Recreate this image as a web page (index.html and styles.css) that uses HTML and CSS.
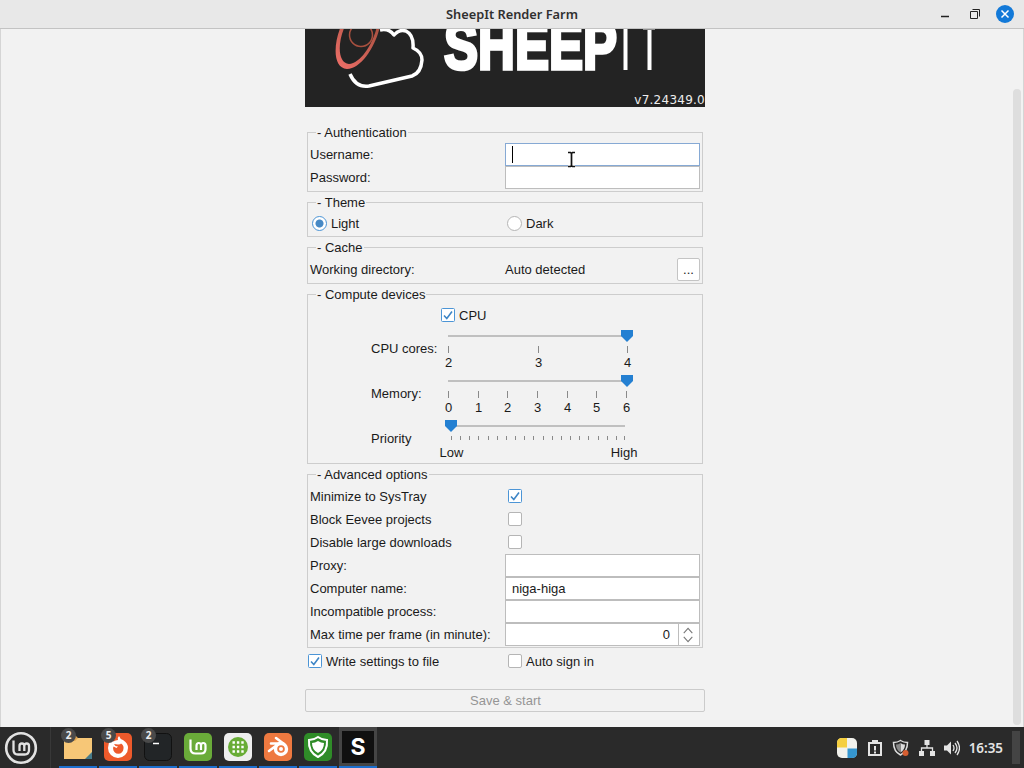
FILE: index.html
```
<!DOCTYPE html>
<html lang="en">
<head>
    <meta charset="UTF-8">
    <meta name="viewport" content="width=device-width, initial-scale=1.0">
    <title>SheepIt Render Farm</title>
    <link rel="stylesheet" href="styles.css">
</head>
<body>

    <!-- Title bar -->
    <header class="titlebar">
        <span class="titlebar-text">SheepIt Render Farm</span>
        <svg class="window-buttons" width="84" height="28" viewBox="0 0 84 28">
            <path d="M6 16.5h8" stroke="#222" stroke-width="1.5"/>
            <path d="M35.5 11.5h7v7h-7zM37.5 9.5h7v7" fill="none" stroke="#222"/>
            <circle cx="70" cy="14" r="9" fill="#1279d8"/>
            <path d="M66.5 10.5l7 7m0-7l-7 7" stroke="#fff" stroke-width="1.5"/>
        </svg>
    </header>

    <main class="window">
        <form class="settings">
            <!-- Logo, scrolled partly out of view -->
            <svg class="logo" width="400" height="78" viewBox="0 0 400 78">
                <defs>
                    <linearGradient id="ring" x1="0" y1="1" x2="1" y2="0">
                        <stop offset="0" stop-color="#f0706a"/>
                        <stop offset="1" stop-color="#a8503f"/>
                    </linearGradient>
                </defs>
                <rect width="400" height="78" fill="#232323"/>
                <path d="M75 1Q84-1 89 6Q94 0 101 2Q109 6 108 19Q117 23 117 31Q116 44 107 47L64 57Q51 59 45 45" fill="none" stroke="#fff" stroke-width="3.5" stroke-linejoin="round"/>
                <path fill-rule="evenodd" fill="url(#ring)" d="M36-3C28 16 28 39 42 40C56 40 71 17 75-3zM40-3C32 15 33 34 44 35C56 34 68 15 72-3z"/>
                <circle cx="56" cy="6" r="11.5" fill="none" stroke="#a8503f" stroke-width="1.5"/>
                <text class="logo-bold" x="139" y="39.5" textLength="173" lengthAdjust="spacingAndGlyphs">SHEEP</text>
                <path d="M320.500 0v41M344.500 0v41" fill="none" stroke="#fff" stroke-width="4"/>
                <path d="M338 .5h12" stroke="#8f8f8f"/>
                <text class="logo-version" x="400" y="75" text-anchor="end">v7.24349.0</text>
            </svg>

            <fieldset class="group auth">
                <legend>- Authentication</legend>
                <div class="row">
                    <span class="label">Username:</span>
                    <div class="field focused"><span class="caret"></span></div>
                </div>
                <div class="row">
                    <span class="label">Password:</span>
                    <div class="field"></div>
                </div>
            </fieldset>

            <fieldset class="group theme">
                <legend>- Theme</legend>
                <div class="row">
                    <span class="label option"><i class="radio on"></i>Light</span>
                    <span class="option"><i class="radio"></i>Dark</span>
                </div>
            </fieldset>

            <fieldset class="group cache">
                <legend>- Cache</legend>
                <div class="row">
                    <span class="label">Working directory:</span>
                    <span class="directory">Auto detected</span>
                    <span class="browse">...</span>
                </div>
            </fieldset>

            <fieldset class="group compute">
                <legend>- Compute devices</legend>
                <div class="cpu-row">
                    <svg class="check" width="14" height="14" viewBox="0 0 14 14"><rect x=".5" y=".5" width="13" height="13" rx="1" fill="#fff" stroke="#4c95d6"/><path d="M3 7.500l2.800 3L11 3.500" fill="none" stroke="#3f86c6" stroke-width="1.600"/></svg>
                    CPU
                </div>
                <div class="slider-row">
                    <span class="slider-label">CPU cores:</span>
                    <svg class="slider" width="206" height="45" viewBox="0 0 206 45">
                        <path class="track" d="M7 10h178"/>
                        <path class="ticks" d="M7.500 20v7M97.500 20v7M186.500 20v7"/>
                        <path class="thumb" d="M180 4h12v6l-6 6l-6-6z"/>
                        <text x="7.500" y="41">2</text>
                        <text x="97.500" y="41">3</text>
                        <text x="186.500" y="41">4</text>
                    </svg>
                </div>
                <div class="slider-row">
                    <span class="slider-label">Memory:</span>
                    <svg class="slider" width="206" height="45" viewBox="0 0 206 45">
                        <path class="track" d="M7 10h178"/>
                        <path class="ticks" d="M7.500 20v7M37.500 20v7M66.500 20v7M96.500 20v7M126.500 20v7M155.500 20v7M185.500 20v7"/>
                        <path class="thumb" d="M180 4h12v6l-6 6l-6-6z"/>
                        <text x="7.500" y="41">0</text>
                        <text x="37.500" y="41">1</text>
                        <text x="66.500" y="41">2</text>
                        <text x="96.500" y="41">3</text>
                        <text x="126.500" y="41">4</text>
                        <text x="155.500" y="41">5</text>
                        <text x="185.500" y="41">6</text>
                    </svg>
                </div>
                <div class="slider-row">
                    <span class="slider-label">Priority</span>
                    <svg class="slider" width="206" height="45" viewBox="0 0 206 45">
                        <path class="track" d="M10 10h174"/>
                        <path class="ticks" d="M10.500 20v4M19.500 20v4M28.500 20v4M37.500 20v4M47.500 20v4M56.500 20v4M65.500 20v4M74.500 20v4M83.500 20v4M92.500 20v4M102.500 20v4M111.500 20v4M120.500 20v4M129.500 20v4M138.500 20v4M147.500 20v4M157.500 20v4M166.500 20v4M175.500 20v4M183.500 20v4"/>
                        <path class="thumb" d="M4 4h12v6l-6 6l-6-6z"/>
                        <text x="10.500" y="41">Low</text>
                        <text x="183" y="41">High</text>
                    </svg>
                </div>
            </fieldset>

            <fieldset class="group advanced">
                <legend>- Advanced options</legend>
                <div class="row">
                    <span class="label">Minimize to SysTray</span>
                    <svg class="check indent" width="14" height="14" viewBox="0 0 14 14"><rect x=".5" y=".5" width="13" height="13" rx="1" fill="#fff" stroke="#4c95d6"/><path d="M3 7.500l2.800 3L11 3.500" fill="none" stroke="#3f86c6" stroke-width="1.600"/></svg>
                </div>
                <div class="row">
                    <span class="label">Block Eevee projects</span>
                    <i class="box indent"></i>
                </div>
                <div class="row">
                    <span class="label">Disable large downloads</span>
                    <i class="box indent"></i>
                </div>
                <div class="row">
                    <span class="label">Proxy:</span>
                    <div class="field"></div>
                </div>
                <div class="row">
                    <span class="label">Computer name:</span>
                    <div class="field">niga-higa</div>
                </div>
                <div class="row">
                    <span class="label">Incompatible process:</span>
                    <div class="field"></div>
                </div>
                <div class="row">
                    <span class="label">Max time per frame (in minute):</span>
                    <div class="field spinner">
                        <span class="spinner-value">0</span>
                        <svg class="spinner-arrows" width="21" height="21" viewBox="0 0 21 21"><path d="M5 9l4.500-5L14 9M5 13l4.500 5l4.500-5" fill="none" stroke="#777" stroke-width="1.100"/></svg>
                    </div>
                </div>
            </fieldset>

            <div class="bottom-options">
                <span class="label option">
                    <svg class="check" width="14" height="14" viewBox="0 0 14 14"><rect x=".5" y=".5" width="13" height="13" rx="1" fill="#fff" stroke="#4c95d6"/><path d="M3 7.500l2.800 3L11 3.500" fill="none" stroke="#3f86c6" stroke-width="1.600"/></svg>
                    Write settings to file
                </span>
                <span class="option"><i class="box"></i>Auto sign in</span>
            </div>

            <button class="save" type="button" disabled>Save &amp; start</button>
        </form>
        <div class="scrollbar"></div>

        <!-- Mouse pointer -->
        <svg class="pointer" width="11" height="17" viewBox="0 0 11 17"><path d="M2 1.500h2.500l1 1l1-1H9M5.500 2v13M2 15.500h2.500l1-1l1 1H9" fill="none" stroke="#fff" stroke-width="3"/><path d="M2 1.500h2.500l1 1l1-1H9M5.500 2v13M2 15.500h2.500l1-1l1 1H9" fill="none" stroke="#111" stroke-width="1.700"/></svg>
    </main>

    <!-- Taskbar -->
    <footer class="taskbar">
        <svg class="menu-icon" width="34" height="34" viewBox="0 0 34 34">
            <circle cx="17" cy="17" r="14.800" fill="none" stroke="#e2e2e2" stroke-width="2.600"/>
            <path d="M9.500 9.500v9.500q0 4.500 4.500 4.500h6.500q4.500 0 4.500-4.500v-4q0-2.500-2.300-2.500t-2.400 2.500v5M20.300 15q0-2.500-2.400-2.500t-2.400 2.500v5" fill="none" stroke="#e2e2e2" stroke-width="2.300"/>
        </svg>
        <div class="tasks">
            <div class="task">
                <svg width="30" height="30" viewBox="0 0 30 30"><path d="M1 5q0-2 2-2h9l3 3h12q2 0 2 2v19H1z" fill="#e0a551"/><path d="M1 9h11l3-3h14v21H1z" fill="#f7c777"/><path d="M29 20v7h-7z" fill="#467b8a"/></svg>
                <b class="count">2</b>
            </div>
            <div class="task">
                <svg width="30" height="30" viewBox="0 0 30 30"><rect x="1" y="1" width="28" height="28" rx="5" fill="#ee5a2b"/><path d="M8 7l2.500 2.500Q12.500 8 15 8q-1-2 1-4q1 3 4 4q5 3 5 8a10 10 0 0 1-20 0q0-5 3-9z" fill="#fff"/><path d="M11 12l4 .5q3 0 3-1q3 2 2.500 5a5.200 5.200 0 0 1-10.400 0q0-1 .4-2l3 1.500l1.500-1.500q-3 0-4-2.500z" fill="#ee5a2b"/></svg>
                <b class="count">5</b>
            </div>
            <div class="task">
                <svg width="30" height="30" viewBox="0 0 30 30"><rect x="1.500" y="1.500" width="27" height="27" rx="5" fill="#222527" stroke="#111"/><path d="M10 11.500h6" stroke="#fff" stroke-width="1.500"/></svg>
                <b class="count">2</b>
            </div>
            <div class="task">
                <svg width="30" height="30" viewBox="0 0 30 30"><rect x="1" y="1" width="28" height="28" rx="5" fill="#6aab39"/><path d="M7.500 7.500v9q0 5 5 5h5.500q4.500 0 4.500-4.500v-3.500q0-2.500-2.200-2.500T18 13.500V18M18 13.500q0-2.500-2.200-2.500t-2.300 2.500V18" fill="none" stroke="#fff" stroke-width="2.200"/></svg>
            </div>
            <div class="task">
                <svg width="30" height="30" viewBox="0 0 30 30"><rect x="1" y="1" width="28" height="28" rx="5" fill="#eee"/><circle cx="15" cy="15" r="10" fill="#68ac36"/><path d="M9.500 10.500h12M9.500 15h12M9.500 19.500h12" stroke="#fff" stroke-width="2.400" stroke-dasharray="2.400 2"/></svg>
            </div>
            <div class="task">
                <svg width="30" height="30" viewBox="0 0 30 30"><rect x="1" y="1" width="28" height="28" rx="5" fill="#ee7940"/><circle cx="18" cy="17" r="5.500" fill="none" stroke="#fff" stroke-width="3.400"/><circle cx="18" cy="17" r="2" fill="#fff"/><path d="M13 6l8 6M8 11.500h9M6 19l8-6" stroke="#fff" stroke-width="2.600" stroke-linecap="round"/></svg>
            </div>
            <div class="task">
                <svg width="30" height="30" viewBox="0 0 30 30"><rect x="1" y="1" width="28" height="28" rx="5" fill="#2f8c28"/><path d="M15 5q4 3 9 3q1 12-9 17Q5 20 6 8q5 0 9-3z" fill="none" stroke="#fff" stroke-width="2"/><path d="M15 9q3 2 6 2q0 7-6 10q-6-3-6-10q3 0 6-2z" fill="#fff"/></svg>
            </div>
            <div class="task active">
                <span class="sheepit-icon">S</span>
            </div>
        </div>
        <div class="tray">
            <svg width="22" height="22" viewBox="0 0 22 22"><rect x="1" y="1" width="20" height="20" rx="5" fill="#f1f1ec"/><path d="M1 10.500V6q0-5 5-5h5v9.500z" fill="#f5cf3f"/><path d="M11.500 11.500H21V16q0 5-5 5h-4.500z" fill="#3596cf"/></svg>
            <svg width="16" height="18" viewBox="0 0 16 18"><path d="M2 4h12v12H2z" fill="none" stroke="#e4e4e4" stroke-width="2"/><path d="M5 1h6v4H5z" fill="#e4e4e4"/><path d="M8 7v4.500M8 12.500v2" stroke="#e4e4e4" stroke-width="2"/></svg>
            <svg width="18" height="18" viewBox="0 0 18 18"><path d="M8.500 1.500q3 2 7 2q0 9-7 12.500q-7-3.500-7-12.500q4 0 7-2z" fill="none" stroke="#ddd" stroke-width="1.500"/><path d="M8.500 4q2 1.500 4.500 1.500q0 5-4.500 8z" fill="#ddd"/><path d="M8.500 4Q6.500 5.500 4 5.500q0 5 4.500 8z" fill="#888"/><circle cx="13.500" cy="14" r="3" fill="#d65f32"/></svg>
            <svg width="16" height="16" viewBox="0 0 16 16"><path d="M5.500 0h5v5h-5zM0 11h5v5H0zM11 11h5v5h-5z" fill="#e4e4e4"/><path d="M8 5v3M2.500 12V8h11v4" fill="none" stroke="#e4e4e4" stroke-width="1.300"/></svg>
            <svg width="16" height="16" viewBox="0 0 16 16"><path d="M0 5.500h3L7 1.500v13L3 10.500H0z" fill="#e4e4e4"/><path d="M9 5q2 3 0 6M11 3q4 5 0 10M13 1q5 7 0 14" fill="none" stroke="#e4e4e4" stroke-width="1.300"/></svg>
            <span class="clock">16:35</span>
            <span class="show-desktop"></span>
        </div>
    </footer>

</body>
</html>
```
FILE: styles.css
```
* {
    box-sizing: border-box;
}

body {
    margin: 0;
    width: 1024px;
    height: 768px;
    overflow: hidden;
    display: flex;
    flex-direction: column;
    font-family: "Liberation Sans", Arial, sans-serif;
    font-size: 13px;
    line-height: 16px;
    color: #1a1a1a;
    background-color: #f2f2f2;
}

svg {
    display: block;
    flex-shrink: 0;
}

/* Title bar */
.titlebar {
    display: grid;
    grid-template-columns: 1fr auto 1fr;
    align-items: center;
    height: 29px;
    flex-shrink: 0;
    background-color: #e8e8e8;
    border-bottom: 1px solid #c3c3c3;
}

.titlebar-text {
    grid-column: 2;
    font-family: "Noto Sans", sans-serif;
    font-size: 12.8px;
    font-weight: 600;
    color: #303030;
}

.window-buttons {
    justify-self: end;
    margin-right: 5px;
}

/* Window content */
.window {
    position: relative;
    display: flex;
    justify-content: space-between;
    height: 698px;
    flex-shrink: 0;
    border-left: 1px solid #d5d5d5;
    border-right: 1px solid #d5d5d5;
}

.settings {
    width: 400px;
    margin-left: 304px;
}

.scrollbar {
    width: 8px;
    height: 636px;
    margin: 60px 2px 0 0;
    border-radius: 4px;
    background-color: #dedede;
}

.logo {
    margin-bottom: 17px;
}

.logo-bold {
    font-size: 66px;
    font-weight: bold;
    fill: #fff;
    stroke: #fff;
    stroke-width: 3.5px;
}

.logo-version {
    font-family: "DejaVu Sans", sans-serif;
    font-size: 12px;
    letter-spacing: 0.25px;
    fill: #eee;
}

/* Groups of settings */
.group {
    width: 396px;
    margin: 0 0 2px 2px;
    padding: 2px 2px 0;
    border: 1px solid #cdcdcd;
}

.group legend {
    height: 16px;
    margin-left: 6px;
    padding: 0 1px;
    line-height: 18px;
}

.auth {
    height: 68px;
    padding-top: 3px;
}

.theme {
    height: 43px;
}

.cache {
    height: 45px;
    padding-top: 3px;
}

.compute {
    height: 178px;
}

.advanced {
    height: 182px;
    padding-top: 3px;
}

.row {
    display: flex;
    align-items: center;
    height: 23px;
}

.label {
    width: 195px;
    flex-shrink: 0;
    white-space: nowrap;
}

.field {
    display: flex;
    align-items: center;
    width: 195px;
    height: 23px;
    padding: 0 6px;
    background-color: #fff;
    border: 1px solid #bdbdbd;
}

.field.focused {
    border-color: #86a9d4;
}

.caret {
    width: 1px;
    height: 17px;
    background-color: #000;
}

.option {
    display: flex;
    align-items: center;
    gap: 4px;
}

.radio {
    width: 15px;
    height: 15px;
    margin-left: 2px;
    border: 1px solid #b5b5b5;
    border-radius: 50%;
    background-color: #fff;
}

.radio.on {
    border-color: #4c95d6;
    background: radial-gradient(circle, #4789c5 3.5px, #fff 4.5px);
}

.directory {
    width: 172px;
}

.browse {
    width: 23px;
    height: 23px;
    line-height: 22px;
    text-align: center;
    background-color: #fff;
    border: 1px solid #c4c4c4;
    border-radius: 2px;
}

.check,
.box {
    margin-bottom: 1px;
}

.box {
    width: 14px;
    height: 14px;
    border: 1px solid #b5b5b5;
    border-radius: 2px;
    background-color: #fff;
}

.indent {
    margin-left: 3px;
}

/* Compute devices */
.cpu-row {
    display: flex;
    align-items: center;
    gap: 4px;
    height: 22px;
    padding: 1px 0 0 131px;
}

.slider-row {
    display: flex;
    align-items: center;
    padding-left: 61px;
}

.slider-label {
    width: 70px;
    white-space: nowrap;
}

.slider {
    overflow: visible;
}

.slider text {
    text-anchor: middle;
    fill: #1a1a1a;
}

.track {
    stroke: #c0c0c0;
    stroke-width: 2px;
}

.ticks {
    stroke: #8a8a8a;
}

.thumb {
    fill: #2480d2;
}

/* Max time spinner */
.field.spinner {
    padding: 0;
}

.spinner-value {
    flex: 1;
    padding-right: 8px;
    text-align: right;
}

.spinner-arrows {
    border-left: 1px solid #bdbdbd;
}

.bottom-options {
    display: flex;
    align-items: center;
    height: 23px;
    margin-bottom: 16px;
    padding-left: 3px;
}

.bottom-options .label {
    width: 200px;
}

.save {
    display: block;
    width: 400px;
    height: 23px;
    padding: 0 0 0 1px;
    font-family: inherit;
    font-size: 13px;
    color: #959595;
    background-color: #f2f2f2;
    border: 1px solid #cbcbcb;
    border-radius: 2px;
}

.pointer {
    position: absolute;
    left: 565px;
    top: 122px;
}

/* Taskbar */
.taskbar {
    display: flex;
    align-items: center;
    height: 41px;
    background-color: #2a2a2a;
}

.menu-icon {
    margin: 0 12px 0 4px;
}

.tasks {
    display: flex;
    gap: 2px;
    padding-left: 8px;
    border-left: 1px solid #383838;
}

.task {
    position: relative;
    display: flex;
    align-items: center;
    justify-content: center;
    width: 38px;
    height: 41px;
    border-bottom: 2px solid #1c6fce;
}

.active {
    background-color: #454545;
}

.count {
    position: absolute;
    left: 2px;
    top: 1px;
    width: 15px;
    height: 15px;
    border-radius: 50%;
    font-family: "Noto Sans", sans-serif;
    font-size: 10px;
    line-height: 15px;
    text-align: center;
    color: #eee;
    background-color: #4a4a4a;
}

.sheepit-icon {
    width: 32px;
    height: 32px;
    font-family: Inter, sans-serif;
    font-size: 23px;
    font-weight: bold;
    line-height: 32px;
    text-align: center;
    color: #fff;
    background-color: #101010;
}

.tray {
    display: flex;
    align-items: center;
    gap: 9px;
    margin-left: auto;
    padding-right: 4px;
}

.clock {
    font-family: "Noto Sans", sans-serif;
    font-size: 13.4px;
    font-weight: 600;
    color: #e4e4e4;
}

.show-desktop {
    width: 8px;
    height: 33px;
    background-color: #444;
}
```
